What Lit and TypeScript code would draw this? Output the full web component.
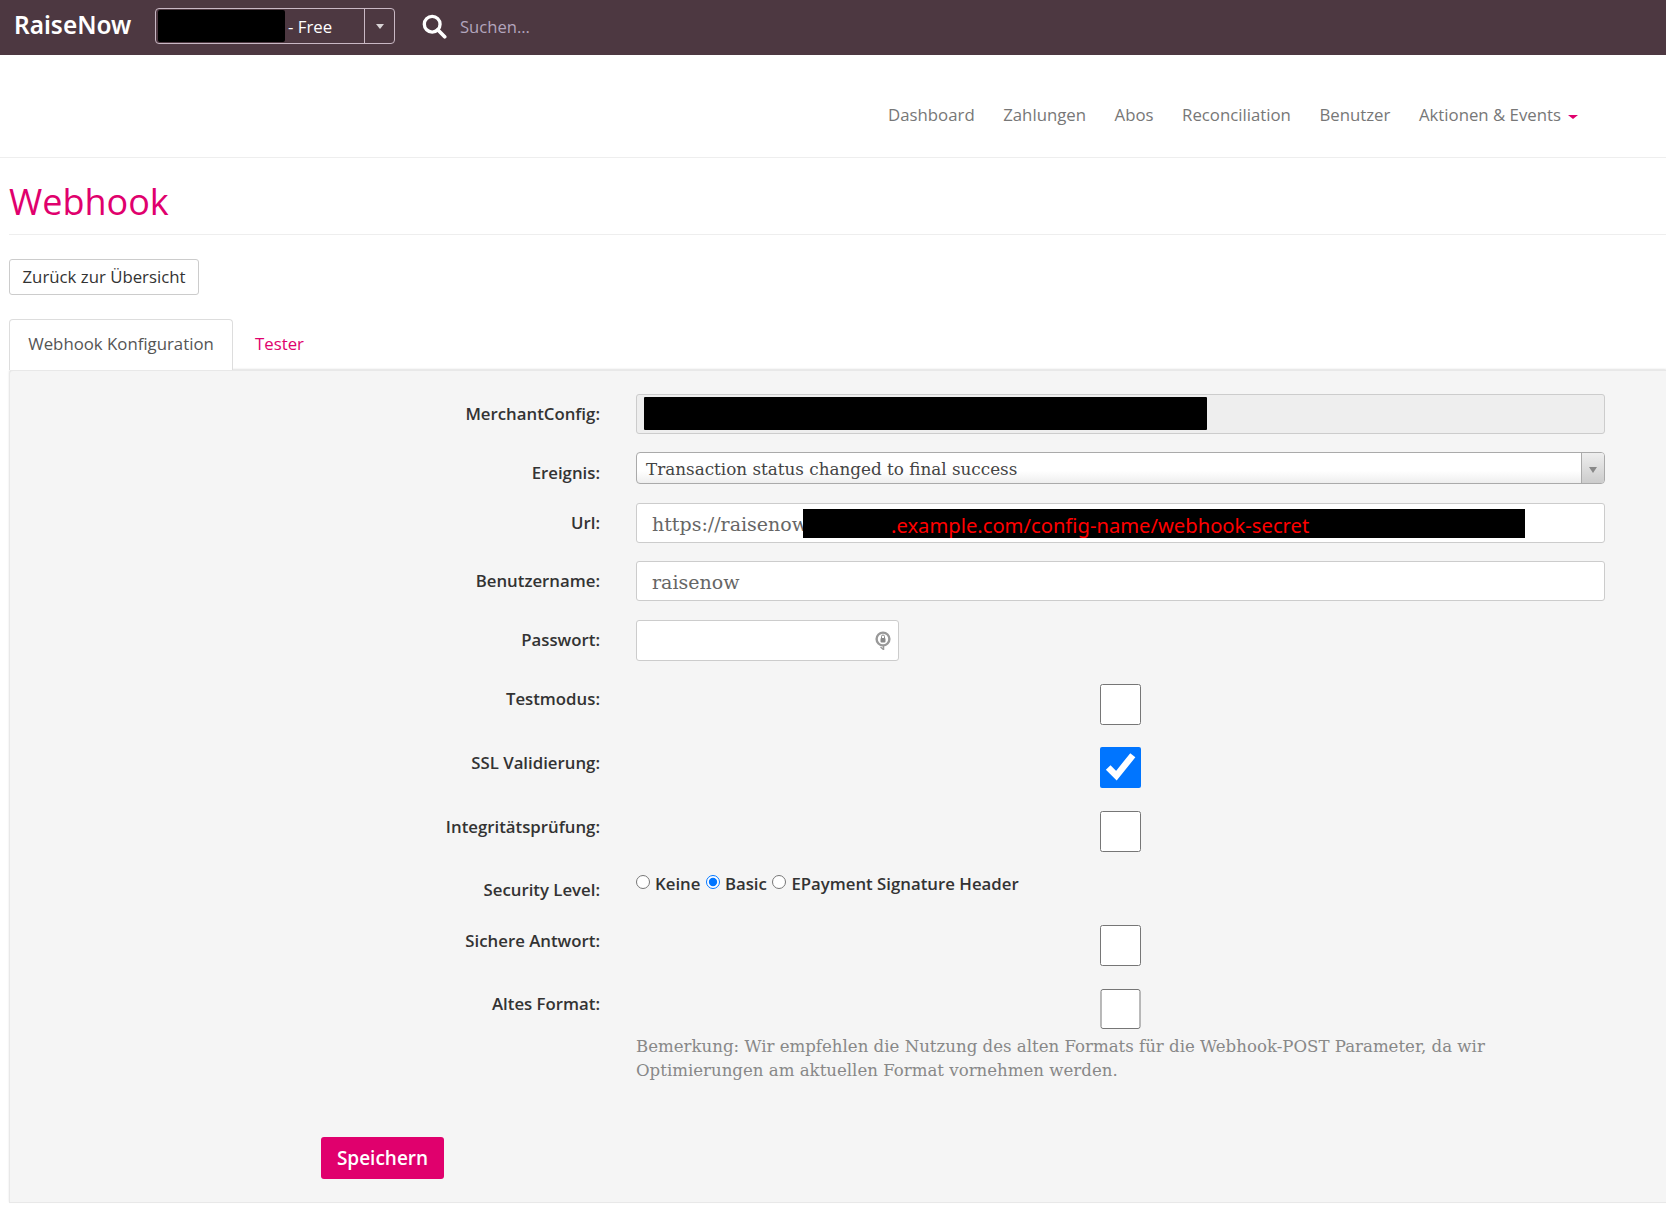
import { LitElement, html, css } from 'lit';
import { customElement } from 'lit/decorators.js';

const NAV_ITEMS = ['Dashboard', 'Zahlungen', 'Abos', 'Reconciliation', 'Benutzer'];

@customElement('app-root')
export class AppRoot extends LitElement {
  static styles = css`
    :host {
      display: block;
      font-family: 'Open Sans', sans-serif;
      color: #333;
      background: #fff;
      height: 1212px;
      overflow: hidden;
    }
    .topbar {
      height: 55px;
      background: #4d3841;
      display: flex;
      align-items: center;
      padding-left: 14px;
      box-sizing: border-box;
    }
    .logo {
      font-family: 'Noto Sans', sans-serif;
      font-size: 24.4px;
      font-weight: 600;
      color: #fff;
      width: 141px;
      line-height: 49px;
      margin-bottom: 6px;
    }
    .account {
      width: 240px;
      height: 36px;
      margin-bottom: 3px;
      box-sizing: border-box;
      border: 1px solid #c9b8c4;
      border-radius: 4px;
      display: flex;
      align-items: center;
      color: #fff;
      font-size: 16.8px;
    }
    .account-name {
      flex: none;
      width: 127px;
      height: 32px;
      margin-left: 2px;
      margin-right: 3px;
      background: #000;
      border-radius: 2px;
    }
    .account-plan {
      flex: 1;
    }
    .account-toggle {
      width: 29px;
      height: 100%;
      border-left: 1px solid #c9b8c4;
      display: flex;
      align-items: center;
      justify-content: center;
    }
    .account-toggle i {
      border: 4px solid transparent;
      border-top: 5px solid #d9d4d6;
      border-bottom: 0;
    }
    .search-icon {
      margin: 0 0 3px 27px;
      width: 25px;
      height: 25px;
      flex: none;
    }
    .search-text {
      margin: 0 0 3px 13px;
      color: #b3a5bd;
      font-size: 16.6px;
    }

    .nav {
      height: 103px;
      box-sizing: border-box;
      border-bottom: 1px solid #eee;
      display: flex;
      justify-content: flex-end;
      align-items: center;
      gap: 28.5px;
      padding: 17px 88px 0 0;
      font-size: 16.8px;
      color: #777;
    }
    .nav .caret {
      display: inline-block;
      margin-left: 7px;
      vertical-align: middle;
      border: 5px solid transparent;
      border-top: 4px solid #e0006d;
      border-bottom: 0;
    }

    .title {
      margin: 0 0 0 9px;
      height: 77px;
      box-sizing: border-box;
      border-bottom: 1px solid #eee;
      font-size: 36px;
      font-weight: 400;
      line-height: 88px;
      color: #e0006d;
    }
    .back {
      display: block;
      margin: 24px 0 24px 9px;
      width: 190px;
      height: 36px;
      box-sizing: border-box;
      border: 1px solid #ccc;
      border-radius: 3px;
      background: #fff;
      font: 16.8px/34px 'Open Sans', sans-serif;
      color: #333;
      padding: 0;
    }

    .tabs {
      display: flex;
      margin-left: 9px;
      font-size: 16.8px;
      height: 51px;
      line-height: 49px;
    }
    .tab {
      box-sizing: border-box;
      width: 224px;
      text-align: center;
      border: 1px solid #ddd;
      border-bottom: 0;
      border-radius: 4px 4px 0 0;
      color: #555;
      background: #fff;
      line-height: 47px;
    }
    .tab-link {
      margin-left: 22px;
      color: #e0006d;
    }

    .panel {
      margin-left: 9px;
      height: 833px;
      box-sizing: border-box;
      background: #f5f5f5;
      border: 1px solid #e8e8e8;
      border-right: 0;
      border-radius: 4px 0 0 0;
      box-shadow: 0 -1px 2px rgba(0, 0, 0, 0.12);
      padding-top: 23px;
    }
    .row {
      display: grid;
      grid-template-columns: 590px 969px;
      column-gap: 36px;
      margin-bottom: 18px;
      align-items: start;
    }
    .row.gap-19 {
      margin-bottom: 19px;
    }
    .row.gap-20 {
      margin-bottom: 20px;
    }
    .row.gap-22 {
      margin-bottom: 22px;
    }
    .row.gap-23 {
      margin-bottom: 23px;
    }
    .label {
      justify-self: end;
      margin-top: 8px;
      font-size: 16.8px;
      font-weight: 600;
      color: #333;
      line-height: 24px;
    }
    .row.select-row .label {
      margin-top: 9px;
    }
    .row.check-row .label {
      margin-top: 3px;
    }
    .row.check-row.mid .label {
      margin-top: 4px;
    }
    .row.radio-row .label {
      margin-top: 6px;
    }

    .field {
      box-sizing: border-box;
      width: 100%;
      height: 40px;
      border: 1px solid #ccc;
      border-radius: 3px;
      background: #fff;
      padding: 1px 15px 0;
      font: 19px 'DejaVu Serif', serif;
      color: #666;
      outline: 0;
      display: block;
    }
    .field.readonly {
      background: #eee;
      position: relative;
    }
    .redact-config {
      position: absolute;
      left: 7px;
      top: 2px;
      width: 563px;
      height: 33px;
      background: #000;
      border-radius: 1px;
    }
    .url {
      position: relative;
    }
    .redact-url {
      position: absolute;
      left: 167px;
      top: 6px;
      width: 722px;
      height: 29px;
      background: #000;
      color: #f00;
      font: 20.2px/33px 'Noto Sans', sans-serif;
      padding-left: 88px;
      box-sizing: border-box;
      white-space: nowrap;
    }
    .select {
      box-sizing: border-box;
      height: 32px;
      border: 1px solid #aaa;
      border-radius: 4px;
      background: linear-gradient(#fff 60%, #eee);
      display: flex;
      align-items: center;
      font: 16.8px 'DejaVu Serif', serif;
      color: #444;
      padding-left: 9px;
      overflow: hidden;
    }
    .select span {
      flex: 1;
      padding-top: 2px;
    }
    .select-arrow {
      width: 22px;
      height: 100%;
      border-left: 1px solid #aaa;
      background: linear-gradient(#eee, #ccc);
      display: flex;
      align-items: center;
      justify-content: center;
    }
    .select-arrow i {
      border: 4px solid transparent;
      border-top: 6px solid #888;
      border-bottom: 0;
      margin-top: 3px;
    }
    .password {
      position: relative;
      width: 263px;
      height: 41px;
    }
    .password .field {
      height: 41px;
    }
    .password svg {
      position: absolute;
      right: 8px;
      top: 10px;
    }
    .check {
      display: block;
      margin: 0 auto;
      width: 41px;
      height: 41px;
    }
    .check.short {
      height: 40px;
    }
    .radios {
      display: flex;
      align-items: center;
      font-size: 16.8px;
      font-weight: 600;
      color: #333;
      line-height: 24px;
    }
    .radios input {
      margin: 0 5px 4px 0;
      width: 14px;
      height: 14px;
      flex: none;
    }
    .radios span {
      margin-right: 5.5px;
    }
    .note {
      margin: 6px 0 54px;
      grid-column: 2;
      font: 16.6px/24px 'DejaVu Serif', serif;
      color: #888;
    }
    .row.last {
      margin-bottom: 0;
    }
    .save {
      display: block;
      margin: 0 0 0 311px;
      width: 123px;
      height: 42px;
      border: 0;
      border-radius: 3px;
      background: #e0006d;
      color: #fff;
      font: 600 19px 'Open Sans', sans-serif;
    }
  `;

  render() {
    return html`
      <div class="topbar">
        <div class="logo">RaiseNow</div>
        <div class="account">
          <div class="account-name"></div>
          <div class="account-plan">- Free</div>
          <div class="account-toggle"><i></i></div>
        </div>
        <svg class="search-icon" viewBox="0 0 27 27" fill="none" stroke="#fff">
          <circle cx="11" cy="11" r="8.5" stroke-width="3.6"></circle>
          <path d="M17 17l7.5 7.5" stroke-width="4" stroke-linecap="round"></path>
        </svg>
        <div class="search-text">Suchen...</div>
      </div>

      <nav class="nav">
        ${NAV_ITEMS.map((item) => html`<span>${item}</span>`)}
        <span>Aktionen &amp; Events<i class="caret"></i></span>
      </nav>

      <h1 class="title">Webhook</h1>
      <button class="back">Zurück zur Übersicht</button>

      <div class="tabs">
        <div class="tab">Webhook Konfiguration</div>
        <div class="tab-link">Tester</div>
      </div>

      <div class="panel">
        <div class="row">
          <div class="label">MerchantConfig:</div>
          <div class="field readonly"><div class="redact-config"></div></div>
        </div>
        <div class="row select-row">
          <div class="label">Ereignis:</div>
          <div class="select">
            <span>Transaction status changed to final success</span>
            <div class="select-arrow"><i></i></div>
          </div>
        </div>
        <div class="row">
          <div class="label">Url:</div>
          <div class="url">
            <input class="field" value="https://raisenow" />
            <div class="redact-url">.example.com/config-name/webhook-secret</div>
          </div>
        </div>
        <div class="row gap-19">
          <div class="label">Benutzername:</div>
          <input class="field" value="raisenow" />
        </div>
        <div class="row gap-23">
          <div class="label">Passwort:</div>
          <div class="password">
            <input class="field" type="password" />
            <svg width="16" height="20" viewBox="0 0 16 20">
              <circle cx="8" cy="9" r="6.4" fill="none" stroke="#999" stroke-width="2.4"></circle>
              <rect x="5.5" y="8" width="5" height="4.5" rx="1" fill="#888"></rect>
              <path d="M6.5 8V6.5a1.5 1.5 0 0 1 3 0V8" fill="none" stroke="#888"></path>
              <path d="M8.5 15v4.5L5.5 17" fill="none" stroke="#999" stroke-width="1.5"></path>
            </svg>
          </div>
        </div>
        <div class="row check-row gap-22">
          <div class="label">Testmodus:</div>
          <input class="check" type="checkbox" />
        </div>
        <div class="row check-row mid gap-23">
          <div class="label">SSL Validierung:</div>
          <input class="check" type="checkbox" checked />
        </div>
        <div class="row check-row mid gap-20">
          <div class="label">Integritätsprüfung:</div>
          <input class="check" type="checkbox" />
        </div>
        <div class="row radio-row gap-23">
          <div class="label">Security Level:</div>
          <div class="radios">
            <input type="radio" name="level" /><span>Keine</span>
            <input type="radio" name="level" checked /><span>Basic</span>
            <input type="radio" name="level" /><span>EPayment Signature Header</span>
          </div>
        </div>
        <div class="row check-row mid gap-23">
          <div class="label">Sichere Antwort:</div>
          <input class="check" type="checkbox" />
        </div>
        <div class="row check-row last">
          <div class="label">Altes Format:</div>
          <input class="check short" type="checkbox" />
          <p class="note">
            Bemerkung: Wir empfehlen die Nutzung des alten Formats für die Webhook-POST Parameter, da wir
            Optimierungen am aktuellen Format vornehmen werden.
          </p>
        </div>
        <button class="save">Speichern</button>
      </div>
    `;
  }
}
